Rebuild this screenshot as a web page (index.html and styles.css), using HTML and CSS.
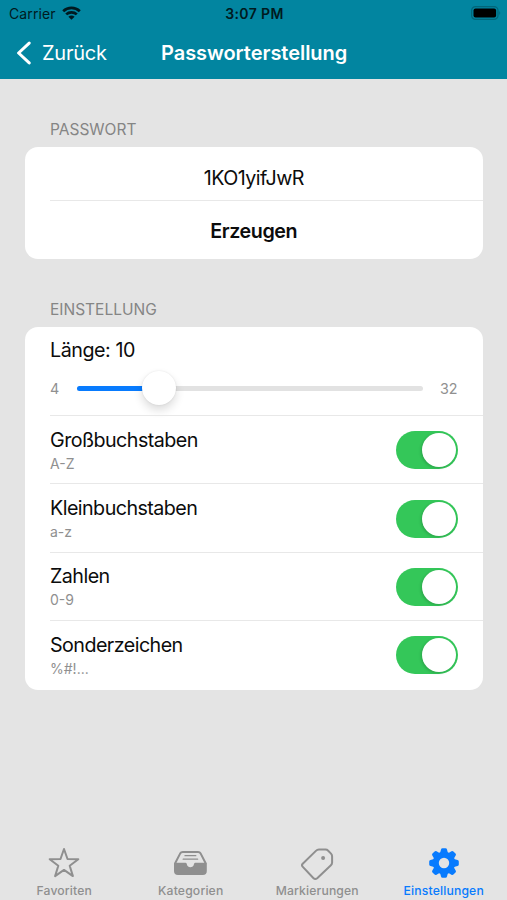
FILE: index.html
```html
<!DOCTYPE html>
<html lang="de">
<head>
<meta charset="utf-8">
<meta name="viewport" content="width=device-width, initial-scale=1">
<title>Passworterstellung</title>
<link rel="stylesheet" href="styles.css">
</head>
<body>
<div class="screen">
  <header class="header">
    <div class="status">
      <div class="status-left">
        <span class="carrier">Carrier</span>
        <svg class="wifi" width="19" height="14" viewBox="0 0 19 14" fill="none" stroke="#001a20" stroke-width="2.7">
          <path d="M1.2 5.3C5.8 .8 13.2 .8 17.8 5.3"/>
          <path d="M4.2 8.4C7.1 5.6 11.9 5.6 14.8 8.4"/>
          <path d="M9.5 13.8 6.4 10.7Q9.5 8.3 12.6 10.7Z" fill="#001a20" stroke="none"/>
        </svg>
      </div>
      <span class="clock">3:07 PM</span>
      <svg class="battery" width="31" height="14" viewBox="0 0 31 14">
        <rect x=".6" y=".6" width="26.4" height="12.8" rx="4" fill="none" stroke="#02667a" stroke-width="1.2"/>
        <rect x="2.5" y="2.5" width="22.6" height="9" rx="2" fill="#000"/>
        <path d="M28.3 5Q30.2 7 28.3 9Z" fill="#02667a"/>
      </svg>
    </div>
    <nav class="navbar">
      <a class="back">
        <svg width="16" height="24" viewBox="0 0 16 24" fill="none" stroke="#fff" stroke-width="3" stroke-linecap="round" stroke-linejoin="round"><path d="M13.2 2.1 2.6 12 13.2 21.9"/></svg>
        <span>Zurück</span>
      </a>
      <h1 class="title">Passworterstellung</h1>
    </nav>
  </header>

  <main class="content">
    <h2 class="caption">PASSWORT</h2>
    <section class="card">
      <div class="row password"><span>1KO1yifJwR</span></div>
      <div class="row generate"><span>Erzeugen</span></div>
    </section>

    <h2 class="caption caption-second">EINSTELLUNG</h2>
    <section class="card">
      <div class="row length">
        <div class="label label-length">Länge: 10</div>
        <div class="slider">
          <span class="min">4</span>
          <div class="track"><div class="fill"></div><div class="knob"></div></div>
          <span class="max">32</span>
        </div>
      </div>
      <div class="row option"><div><div class="label">Großbuchstaben</div><div class="sub">A-Z</div></div><div class="switch"></div></div>
      <div class="row option"><div><div class="label">Kleinbuchstaben</div><div class="sub">a-z</div></div><div class="switch"></div></div>
      <div class="row option"><div><div class="label">Zahlen</div><div class="sub">0-9</div></div><div class="switch"></div></div>
      <div class="row option"><div><div class="label">Sonderzeichen</div><div class="sub">%#!...</div></div><div class="switch"></div></div>
    </section>
  </main>

  <nav class="tabs">
    <a class="tab">
      <svg width="36" height="36" viewBox="0 0 36 36" fill="none" stroke="currentColor" stroke-width="2" stroke-linejoin="round"><path d="M18 4 21.5 14 32.3 14.2 23.7 20.7 26.9 31.1 18 24.9 9.1 31.1 12.3 20.7 3.7 14.2 14.5 14Z"/></svg>
      <span>Favoriten</span>
    </a>
    <a class="tab">
      <svg width="36" height="36" viewBox="0.6 0 36 36" fill="none" stroke="currentColor" stroke-width="2" stroke-linejoin="round" stroke-linecap="round">
        <path d="M2.6 18.5 7.7 8.6Q8.6 7 10.4 7H25.6Q27.4 7 28.3 8.6L33.4 18.5"/>
        <path d="M12.6 10.7H23.4M10.8 14.2H25.2" stroke-width="1.3"/>
        <path d="M1.6 19.5Q1.6 17.7 3.4 17.7H13Q14.1 17.7 14.4 19C15 23.4 21 23.4 21.6 19Q21.9 17.7 23 17.7H32.6Q34.4 17.7 34.4 19.5V26Q34.4 30 30.4 30H5.6Q1.6 30 1.6 26Z" fill="currentColor" stroke="none"/>
      </svg>
      <span>Kategorien</span>
    </a>
    <a class="tab">
      <svg width="36" height="36" viewBox="0 0 36 36" fill="none" stroke="currentColor" stroke-width="2" stroke-linejoin="round">
        <path d="M3.7 18.8 16.9 5.9Q18.2 4.6 20 4.6H26.5Q28.1 4.6 29.2 5.7L32 8.6Q33.1 9.8 33.1 11.4V17.6Q33.1 19.2 31.9 20.3L18.2 33.3Q16.2 34.9 14.3 33L3.6 21.6Q2.3 20.2 3.7 18.8Z"/>
        <circle cx="24.1" cy="13" r="2" fill="currentColor" stroke="none"/>
      </svg>
      <span>Markierungen</span>
    </a>
    <a class="tab active">
      <svg width="36" height="36" viewBox="0 0 36 36" fill="currentColor">
        <defs><path id="tooth" d="M13.8 9 15 4.5Q15.3 3.2 16.5 3.2H19.5Q20.7 3.2 21 4.5L22.2 9Z"/></defs>
        <circle cx="18" cy="18" r="8.2" fill="none" stroke="currentColor" stroke-width="6"/>
        <use href="#tooth"/>
        <use href="#tooth" transform="rotate(45 18 18)"/>
        <use href="#tooth" transform="rotate(90 18 18)"/>
        <use href="#tooth" transform="rotate(135 18 18)"/>
        <use href="#tooth" transform="rotate(180 18 18)"/>
        <use href="#tooth" transform="rotate(225 18 18)"/>
        <use href="#tooth" transform="rotate(270 18 18)"/>
        <use href="#tooth" transform="rotate(315 18 18)"/>
      </svg>
      <span>Einstellungen</span>
    </a>
  </nav>
</div>
</body>
</html>
```
FILE: styles.css
```css
* { box-sizing: border-box; }
body {
  margin: 0;
  background: #e4e4e4;
  color: #0c0c0c;
  font-family: Inter, "Liberation Sans", sans-serif;
}
h1, h2 { margin: 0; font-weight: 400; }
.screen { height: 900px; display: flex; flex-direction: column; overflow: hidden; }

.header { height: 79px; background: #0285a0; flex: none; }
.status {
  height: 27px;
  padding: 0 7px 0 9px;
  display: grid;
  grid-template-columns: 1fr auto 1fr;
  align-items: center;
  color: #001a20;
}
.status-left { display: flex; align-items: center; gap: 6px; }
.carrier { font-size: 14px; letter-spacing: 0.1px; }
.wifi { margin-top: -2px; }
.clock { font-size: 14px; font-weight: 600; letter-spacing: 0.4px; }
.battery { justify-self: end; margin: -1px -2px 0 0; }
.navbar {
  height: 51px;
  padding-left: 16px;
  display: grid;
  grid-template-columns: 145px auto;
  justify-content: start;
  align-items: center;
  color: #fff;
}
.back { display: flex; align-items: center; gap: 10px; font-size: 20px; letter-spacing: -0.25px; }
.title { font-size: 20px; font-weight: 600; letter-spacing: -0.04px; }

.content { flex: 1; padding: 38px 25px 0; }
.caption {
  height: 30px;
  padding-left: 25px;
  line-height: 25px;
  font-size: 15.5px;
  color: #858585;
}
.caption-second { margin-top: 38px; }
.card { background: #fff; border-radius: 13px; overflow: hidden; margin-right: -0.5px; }
.row { position: relative; }
.row + .row::before {
  content: "";
  position: absolute;
  top: -1px;
  left: 25px;
  right: 0;
  height: 1px;
  background: #e8e8e8;
}
.password, .generate { display: flex; justify-content: center; align-items: center; font-size: 19.7px; }
.password { height: 54px; padding-top: 7px; letter-spacing: -0.55px; }
.generate { height: 58px; padding-top: 2px; font-weight: 600; letter-spacing: -0.4px; }
.length { height: 89px; padding: 11px 25px 0; }
.label { font-size: 19.7px; line-height: 24px; letter-spacing: -0.55px; }
.label-length { letter-spacing: -0.45px; }
.sub { font-size: 14px; line-height: 18px; margin-top: 3px; color: #909090; }
.slider { display: flex; align-items: center; height: 34px; margin-top: 9px; color: #909090; font-size: 14.3px; }
.min { width: 27px; }
.max { width: 35px; text-align: right; }
.track { flex: 1; height: 5px; border-radius: 3px; background: #e2e2e2; position: relative; }
.fill { width: 24%; height: 5px; border-radius: 3px; background: #087bfe; }
.knob {
  position: absolute;
  left: 65px;
  top: -15px;
  width: 34px;
  height: 34px;
  border-radius: 50%;
  background: #fff;
  box-shadow: 0 5px 10px rgba(0,0,0,.14), 0 0 2px rgba(0,0,0,.1);
}
.option { height: 68.4px; padding: 0 25px 0; display: flex; justify-content: space-between; align-items: center; }
.switch {
  width: 62px;
  height: 38px;
  border-radius: 19px;
  background: #34c759;
  padding: 2px;
  display: flex;
  justify-content: flex-end;
}
.switch::before {
  content: "";
  width: 34px;
  height: 34px;
  border-radius: 50%;
  background: #fff;
  box-shadow: -1px 1px 3px rgba(0,0,0,.18);
}

.tabs { height: 60px; flex: none; display: grid; grid-template-columns: repeat(4, 1fr); padding: 5px 0 0 1px; }
.tab { display: flex; flex-direction: column; align-items: center; color: #8f8f8f; font-size: 12.2px; font-weight: 500; letter-spacing: 0.15px; }
.tab svg { display: block; flex: none; }
.tab span { line-height: 20px; }
.active { color: #087bfe; }
```
